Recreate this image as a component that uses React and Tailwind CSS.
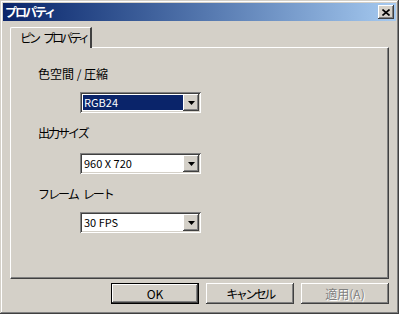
import React from 'react'

const raised = 'shadow-[inset_-1px_-1px_#404040,inset_1px_1px_#ffffff,inset_-2px_-2px_#808080,inset_2px_2px_#d4d0c8]'
const sunken = 'shadow-[inset_1px_1px_#808080,inset_-1px_-1px_#ffffff,inset_2px_2px_#404040,inset_-2px_-2px_#d4d0c8]'

function Select({ value, selected }) {
  return (
    <div className={`flex w-[121px] h-[21px] bg-white p-[2px] ${sunken}`}>
      <div className="flex-1 flex items-center pl-[1px]">
        <span
          className={`h-[15px] w-full flex items-center pl-[1px] text-[11px] leading-none ${
            selected ? 'bg-[#0a246a] text-white' : 'text-black'
          }`}
        >
          {value}
        </span>
      </div>
      <div className={`w-[16px] h-[17px] bg-[#d4d0c8] flex items-center justify-center ${raised}`}>
        <svg width="7" height="4" viewBox="0 0 7 4">
          <path d="M0 0h7L3.5 4z" fill="#000" />
        </svg>
      </div>
    </div>
  )
}

function Button({ children, isDefault, disabled, tight }) {
  return (
    <div
      className={`w-[88px] h-[21px] flex items-center justify-center text-[12px] bg-[#d4d0c8] ${
        isDefault ? 'border border-black' : ''
      } ${disabled ? 'text-[#808080] [text-shadow:1px_1px_#ffffff]' : 'text-black'}`}
    >
      <div className={`w-full h-full flex items-center justify-center ${raised} ${tight ? 'tracking-[-2.5px]' : ''}`}>
        {children}
      </div>
    </div>
  )
}

const Gap = () => <span className="inline-block w-[5px]" />

export default function App() {
  return (
    <div
      className="w-[399px] h-[314px] bg-[#d4d0c8] p-[3px] flex flex-col shadow-[inset_-1px_-1px_#404040,inset_1px_1px_#d4d0c8,inset_-2px_-2px_#808080,inset_2px_2px_#ffffff]"
      style={{ fontFamily: '"Noto Sans CJK JP", "Liberation Sans", sans-serif' }}
    >
      {/* Title bar */}
      <div className="h-[18px] flex items-center pl-[2px] pr-[2px] bg-gradient-to-r from-[#0a246a] to-[#a6caf0]">
        <span className="text-white font-bold text-[12px] leading-none tracking-[-2px]">プロパティ</span>
        <div className={`ml-auto w-[16px] h-[14px] bg-[#d4d0c8] flex items-center justify-center ${raised}`}>
          <svg width="8" height="7" viewBox="0 0 8 7">
            <path d="M0.5 0.5L7.5 6.5M7.5 0.5L0.5 6.5" stroke="#000" strokeWidth="1.6" />
          </svg>
        </div>
      </div>

      {/* Body */}
      <div className="flex-1 flex flex-col px-[7px] pt-[6px]">
        <div className="flex relative z-10 -mb-[1px]">
          <div className="w-[82px] h-[21px] bg-[#d4d0c8] flex items-center pl-[9px] pb-[1px] text-[12px] whitespace-nowrap tracking-[-3px] border-t border-l border-white border-r-2 border-r-[#404040] rounded-tl-[2px]">
            ピン<Gap />プロパティ
          </div>
        </div>
        <div className="w-[379px] h-[232px] border-l border-t border-white border-r border-b border-r-[#404040] border-b-[#404040] shadow-[inset_-1px_-1px_#808080] pl-[27px] pt-[19px] text-[12px]">
          <div className="h-[14px] leading-[14px] whitespace-nowrap">色空間 / 圧縮</div>
          <div className="mt-[11px] ml-[42px]">
            <Select value="RGB24" selected />
          </div>
          <div className="mt-[13px] h-[14px] leading-[14px] whitespace-nowrap tracking-[-2px]">出力サイズ</div>
          <div className="mt-[13px] ml-[42px]">
            <Select value="960 X 720" />
          </div>
          <div className="mt-[13px] h-[14px] leading-[14px] whitespace-nowrap tracking-[-2px]">
            フレーム<Gap />レート
          </div>
          <div className="mt-[11px] ml-[42px]">
            <Select value="30 FPS" />
          </div>
        </div>
        <div className="flex justify-end gap-[7px] mt-[4px]">
          <Button isDefault>OK</Button>
          <Button tight>キャンセル</Button>
          <Button disabled>適用(A)</Button>
        </div>
      </div>
    </div>
  )
}
